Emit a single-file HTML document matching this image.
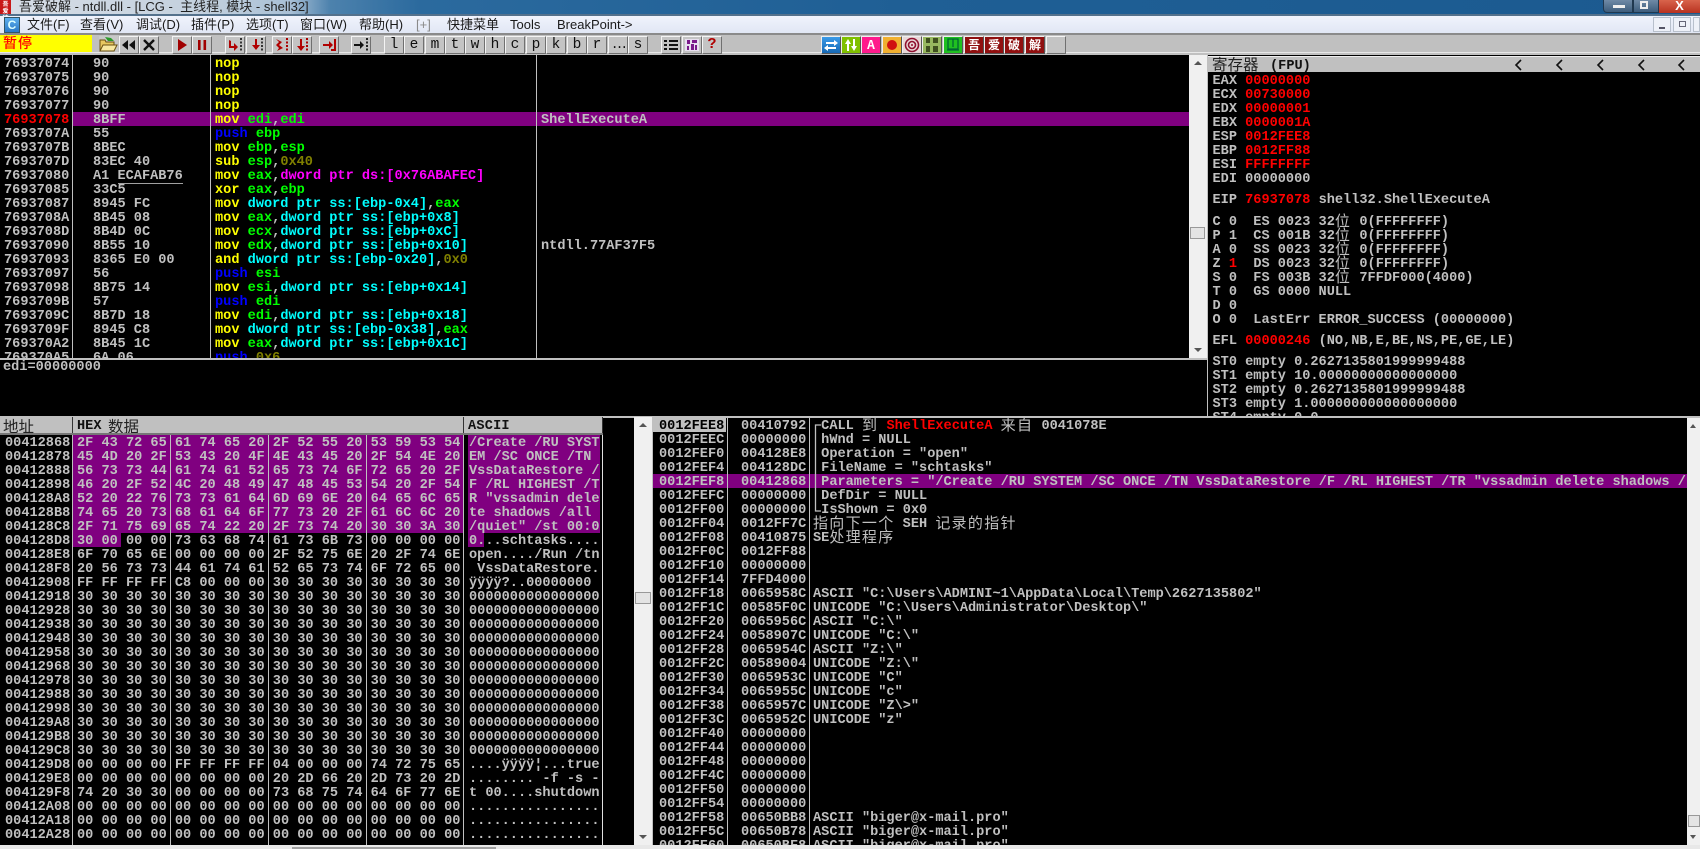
<!DOCTYPE html>
<html><head><meta charset="utf-8"><style>
html,body{margin:0;padding:0;background:#000;width:1700px;height:849px;overflow:hidden}
#p{position:absolute;left:0;top:0;width:1700px;height:849px;overflow:hidden;background:#000;font-family:"Liberation Sans","Noto Sans CJK SC",sans-serif;filter:blur(.35px)}
.a{position:absolute}
.c{position:absolute;white-space:pre;font:bold 13.6px/14px "Liberation Mono","Noto Sans CJK SC",monospace;color:#c0c0c0;transform:translateY(2px)}
.r{position:absolute;left:4.5px;white-space:pre;font:bold 13.6px/14px "Liberation Mono","Noto Sans CJK SC",monospace;color:#c0c0c0;height:14px;transform:translateY(2px)}
.h{position:absolute;background:#800080}
.v{position:absolute;width:1px;background:#c0c0c0}
.y{color:#ff0}.g{color:#0f0}.u{color:#00f}.k{color:#0ff}.m{color:#f0f}.o{color:#808000}.e{color:#f00}
.z{display:inline-block;position:relative;top:-2px;height:14px;line-height:14px;vertical-align:top;font:400 15px/14px "WenQuanYi Zen Hei","Noto Sans CJK SC",sans-serif;letter-spacing:1.3px}
.mn{position:absolute;top:16px;font-size:13px;line-height:17px;color:#1a1a1a;white-space:pre}
.b{position:absolute;top:36px;width:18px;height:16px;background:#c4c4c4;border:1px solid;border-color:#f4f4f4 #707070 #707070 #f4f4f4;box-sizing:content-box;text-align:center;font:14.5px/16px "Liberation Mono",monospace;color:#111;overflow:hidden}
.b svg{position:absolute;left:0;top:0}
.i{position:absolute;top:36px;width:18px;height:16px;border:1px solid #ddd;border-color:#eee #555 #555 #eee;text-align:center;overflow:hidden;color:#fff;font:700 12px/16px "Noto Sans CJK SC",sans-serif}
.i svg{position:absolute;left:0;top:0}
.st div{height:14px;white-space:pre}
</style></head><body><div id="p">

<!-- title bar -->
<div class="a" style="left:0;top:0;width:1700px;height:15px;background:linear-gradient(90deg,#d7dde6 0,#c4d1de 200px,#a9c0d6 290px,#4d82ad 330px,#2b6a9e 420px,#1f5f95 900px,#1b5a90 1700px)"></div>
<div class="a" style="left:0;top:14px;width:1700px;height:2px;background:#54718c"></div>
<div class="a" style="left:0;top:0;width:11px;height:14px;background:#c81818;color:#fff;font:700 6px/7px 'Noto Sans CJK SC',sans-serif;text-align:center">吾爱破解</div>
<div class="a" style="left:19px;top:0;font-size:13px;line-height:14px;color:#222;white-space:pre">吾爱破解 - ntdll.dll - [LCG -  主线程, 模块 - shell32]</div>
<!-- caption buttons -->
<div class="a" style="left:1603px;top:0;width:30px;height:13px;background:linear-gradient(#6f8aa6,#3e5d7c);border:1px solid #20384f;border-top:0;border-radius:0 0 0 4px;box-sizing:border-box"><div class="a" style="left:9px;top:5px;width:12px;height:3px;background:#eee"></div></div>
<div class="a" style="left:1633px;top:0;width:26px;height:13px;background:linear-gradient(#6f8aa6,#3e5d7c);border:1px solid #20384f;border-top:0;box-sizing:border-box"><div class="a" style="left:6px;top:1px;width:8px;height:8px;border:2px solid #eee;box-sizing:border-box"></div></div>
<div class="a" style="left:1659px;top:0;width:41px;height:13px;background:linear-gradient(#d8644c,#b83220);color:#fff;font:700 13px/11px 'Liberation Sans',sans-serif;text-align:center">X</div>

<!-- menu -->
<div class="a" style="left:0;top:16px;width:1700px;height:18px;background:linear-gradient(#f0f3fc,#e0e6f4)"></div>
<div class="a" style="left:0;top:33px;width:1700px;height:2px;background:#8a8a8a"></div>
<div class="a" style="left:4px;top:17px;width:16px;height:16px;background:linear-gradient(#5fb0ee,#2a78c6);border:1px solid #356;box-sizing:border-box;color:#dff;font:700 12px/14px 'Liberation Sans',sans-serif;text-align:center">C</div>
<div class="mn" style="left:27px">文件(F)</div>
<div class="mn" style="left:80px">查看(V)</div>
<div class="mn" style="left:136px">调试(D)</div>
<div class="mn" style="left:191px">插件(P)</div>
<div class="mn" style="left:246px">选项(T)</div>
<div class="mn" style="left:300px">窗口(W)</div>
<div class="mn" style="left:359px">帮助(H)</div>
<div class="mn" style="left:416px;color:#8a8a8a">[+]</div>
<div class="mn" style="left:447px">快捷菜单</div>
<div class="mn" style="left:510px">Tools</div>
<div class="mn" style="left:557px">BreakPoint-&gt;</div>
<div class="a" style="left:1653px;top:17px;width:18px;height:15px;background:#eef1f8;border:1px solid #b8c0cc;box-sizing:border-box"><div class="a" style="left:5px;top:9px;width:6px;height:2px;background:#556"></div></div>
<div class="a" style="left:1673px;top:17px;width:18px;height:15px;background:#eef1f8;border:1px solid #b8c0cc;box-sizing:border-box"><div class="a" style="left:5px;top:3px;width:7px;height:6px;border:1px solid #667;box-sizing:border-box"></div></div>
<div class="a" style="left:1693px;top:17px;width:7px;height:15px;background:#eef1f8;border:1px solid #b8c0cc;box-sizing:border-box"></div>

<!-- toolbar -->
<div class="a" style="left:0;top:35px;width:1700px;height:20px;background:#c0c0c0"></div>
<div class="a" style="left:0;top:52px;width:1700px;height:1px;background:#e8e8e8"></div>
<div class="a" style="left:0;top:35px;width:92px;height:17px;background:#ff0;color:#f00;font:500 14px/17px 'Noto Sans CJK SC',sans-serif;padding-left:3px;box-sizing:border-box;letter-spacing:1px">暂停</div>

<div class="a" style="left:99px;top:36px;width:19px;height:16px;background:#c8c8c8"><svg width="19" height="16"><path d="M6 1l6 1 3 3-6 0z" fill="#2a9a2a"/><path d="M1 4h5l1 2h8v9H1z" fill="#e8c860" stroke="#6a5010"/><path d="M1 15l3-6h14l-3 6z" fill="#f8e8a0" stroke="#6a5010"/></svg></div>
<div class="b" style="left:119px"><svg width="18" height="16"><path d="M8 3v10L2 8zM15 3v10L9 8z" fill="#111"/></svg></div>
<div class="b" style="left:139px"><svg width="18" height="16"><path d="M4 3l10 10M14 3L4 13" stroke="#111" stroke-width="2.4"/></svg></div>
<div class="b" style="left:172px"><svg width="18" height="16"><path d="M5 2v12l9-6z" fill="#a00000"/></svg></div>
<div class="b" style="left:192px"><svg width="18" height="16"><path d="M5 3h2.6v10H5zM10.5 3h2.6v10h-2.6z" fill="#a00000"/></svg></div>
<div class="b" style="left:225px"><svg width="18" height="16"><path d="M3 3l2 1v5h3V6l4 4-4 4v-3H3z" fill="#b00000"/><path d="M15 1v14" stroke="#333" stroke-width="2" stroke-dasharray="2 1.5"/></svg></div>
<div class="b" style="left:246px"><svg width="18" height="16"><path d="M8 2h2v6h3l-4 5-4-5h3z" fill="#b00000"/><path d="M15 1v14" stroke="#333" stroke-width="2" stroke-dasharray="2 1.5"/></svg></div>
<div class="b" style="left:272px"><svg width="18" height="16"><path d="M3 2l6 3-3 3 4 3-6 3 2-3-3-3 3-3z" fill="#b00000"/><path d="M14 1v14" stroke="#a00" stroke-width="2" stroke-dasharray="2 1.5"/></svg></div>
<div class="b" style="left:292px"><svg width="18" height="16"><path d="M7 2h2v7h3l-4 5-4-5h3z" fill="#b00000"/><path d="M14 1v14" stroke="#a00" stroke-width="2" stroke-dasharray="2 1.5"/></svg></div>
<div class="b" style="left:319px"><svg width="18" height="16"><path d="M3 7h6V4l4 4-4 4V9H3z" fill="#b00000"/><path d="M15 2v11h-4" stroke="#b00000" stroke-width="2" fill="none"/></svg></div>
<div class="b" style="left:351px"><svg width="18" height="16"><path d="M2 7h6V4l4 4-4 4V9H2z" fill="#111"/><path d="M15 1v14" stroke="#222" stroke-width="2" stroke-dasharray="2 1.5"/></svg></div>
<div class="b" style="left:384px">l</div>
<div class="b" style="left:404px">e</div>
<div class="b" style="left:425px">m</div>
<div class="b" style="left:445px">t</div>
<div class="b" style="left:465px">w</div>
<div class="b" style="left:485px">h</div>
<div class="b" style="left:505px">c</div>
<div class="b" style="left:526px">p</div>
<div class="b" style="left:546px">k</div>
<div class="b" style="left:567px">b</div>
<div class="b" style="left:587px">r</div>
<div class="b" style="left:608px;letter-spacing:-3px;font-size:13px">...</div>
<div class="b" style="left:628px">s</div>
<div class="b" style="left:661px"><svg width="18" height="16"><path d="M2 3h3v2H2zM7 3h9v2H7zM2 7h3v2H2zM7 7h9v2H7zM2 11h3v2H2zM7 11h9v2H7z" fill="#111"/></svg></div>
<div class="b" style="left:682px"><svg width="18" height="16"><rect x="2" y="2" width="14" height="12" fill="#e8e0f0"/><path d="M4 3h3v4H4zM9 3h5v3H9zM8 7h3v6H8zM12 8h2v5h-2zM4 9h2v4H4z" fill="#7a1a8a"/></svg></div>
<div class="b" style="left:702px;color:#b00000;font-weight:700;font-size:15px">?</div>

<div class="i" style="left:821px;background:linear-gradient(#3a9ae8,#1668b4)"><svg width="18" height="16"><path d="M4 5h8V3l4 3-4 3V7H4zM14 10H6V8L2 11l4 3v-2h8z" fill="#fff"/></svg></div>
<div class="i" style="left:841px;background:#80c000"><svg width="18" height="16"><path d="M6 2l3 5H7v7H5V7H3zM12 14l3-5h-2V2h-2v7H9z" fill="#fff"/></svg></div>
<div class="i" style="left:861px;background:#ff1a8c">A</div>
<div class="i" style="left:882px;background:#f0b030"><svg width="18" height="16"><circle cx="9" cy="8" r="5" fill="#d01010"/></svg></div>
<div class="i" style="left:902px;background:#e8d8d8"><svg width="18" height="16"><circle cx="9" cy="8" r="6.5" fill="none" stroke="#901030" stroke-width="1.6"/><circle cx="9" cy="8" r="3.5" fill="none" stroke="#901030" stroke-width="1.6"/><circle cx="9" cy="8" r="1" fill="#901030"/></svg></div>
<div class="i" style="left:922px;background:#98b860"><svg width="18" height="16"><path d="M3 1h4v5H3zM10 1h5v5h-5zM3 9h4v6H3zM10 9h5v6h-5z" fill="#405020"/></svg></div>
<div class="i" style="left:943px;background:#20c020"><svg width="18" height="16"><path d="M4 2h10v10H4zM9 2v8M3 13h12" fill="none" stroke="#063" stroke-width="1.3"/></svg></div>
<div class="i" style="left:964px;background:#901010">吾</div>
<div class="i" style="left:984px;background:#901010">爱</div>
<div class="i" style="left:1004px;background:#901010">破</div>
<div class="i" style="left:1025px;background:#901010">解</div>
<div class="b" style="left:1046px"></div>

<!-- disassembly -->
<div class="h" style="left:72px;top:112px;width:1117px;height:14px"></div>
<div class="a" style="left:0;top:55px;width:1189px;height:303px;overflow:hidden">
<div class="c" style="left:4px;top:1px">76937074
76937075
76937076
76937077
<span class="e">76937078</span>
7693707A
7693707B
7693707D
76937080
76937085
76937087
7693708A
7693708D
76937090
76937093
76937097
76937098
7693709B
7693709C
7693709F
769370A2
769370A5</div>
<div class="c" style="left:93px;top:1px">90
90
90
90
8BFF
55
8BEC
83EC 40
A1 ECAFAB76
33C5
8945 FC
8B45 08
8B4D 0C
8B55 10
8365 E0 00
56
8B75 14
57
8B7D 18
8945 C8
8B45 1C
6A 06</div>
<div class="c" style="left:215px;top:1px"><span class="y">nop</span>
<span class="y">nop</span>
<span class="y">nop</span>
<span class="y">nop</span>
<span class="y">mov</span> <span class="g">edi</span>,<span class="g">edi</span>
<span class="u">push</span> <span class="g">ebp</span>
<span class="y">mov</span> <span class="g">ebp</span>,<span class="g">esp</span>
<span class="y">sub</span> <span class="g">esp</span>,<span class="o">0x40</span>
<span class="y">mov</span> <span class="g">eax</span>,<span class="m">dword ptr ds:[0x76ABAFEC]</span>
<span class="y">xor</span> <span class="g">eax</span>,<span class="g">ebp</span>
<span class="y">mov</span> <span class="k">dword ptr ss:[ebp-0x4]</span>,<span class="g">eax</span>
<span class="y">mov</span> <span class="g">eax</span>,<span class="k">dword ptr ss:[ebp+0x8]</span>
<span class="y">mov</span> <span class="g">ecx</span>,<span class="k">dword ptr ss:[ebp+0xC]</span>
<span class="y">mov</span> <span class="g">edx</span>,<span class="k">dword ptr ss:[ebp+0x10]</span>
<span class="y">and</span> <span class="k">dword ptr ss:[ebp-0x20]</span>,<span class="o">0x0</span>
<span class="u">push</span> <span class="g">esi</span>
<span class="y">mov</span> <span class="g">esi</span>,<span class="k">dword ptr ss:[ebp+0x14]</span>
<span class="u">push</span> <span class="g">edi</span>
<span class="y">mov</span> <span class="g">edi</span>,<span class="k">dword ptr ss:[ebp+0x18]</span>
<span class="y">mov</span> <span class="k">dword ptr ss:[ebp-0x38]</span>,<span class="g">eax</span>
<span class="y">mov</span> <span class="g">eax</span>,<span class="k">dword ptr ss:[ebp+0x1C]</span>
<span class="u">push</span> <span class="o">0x6</span></div>
<div class="c" style="left:541px;top:57px">ShellExecuteA</div>
<div class="c" style="left:541px;top:183px">ntdll.77AF37F5</div>
</div>
<div class="a" style="left:118px;top:183px;width:65px;height:1px;background:#a0a0a0"></div>
<div class="v" style="left:72px;top:55px;height:303px"></div>
<div class="v" style="left:210px;top:55px;height:303px"></div>
<div class="v" style="left:536px;top:55px;height:303px"></div>
<!-- disasm scrollbar -->
<div class="a" style="left:1189px;top:55px;width:18px;height:303px;background:#f0f0f0"></div>
<div class="a" style="left:1194px;top:61px;border:4px solid transparent;border-bottom:4px solid #555;border-top:0"></div>
<div class="a" style="left:1194px;top:348px;border:4px solid transparent;border-top:4px solid #555;border-bottom:0"></div>
<div class="a" style="left:1190px;top:227px;width:15px;height:12px;background:#e4e4e4;border:1px solid #999;box-sizing:border-box"></div>
<div class="a" style="left:1207px;top:55px;width:1px;height:361px;background:#c0c0c0"></div>
<div class="a" style="left:0;top:358px;width:1207px;height:2px;background:#c0c0c0"></div>
<div class="c" style="left:3px;top:359px">edi=00000000</div>

<!-- registers -->
<div class="a" style="left:1208px;top:56px;width:492px;height:16px;background:#c0c0c0;border-top:1px solid #eee;box-sizing:border-box"></div>
<div class="a" style="left:1212px;top:56px;font:400 15.5px/16px 'WenQuanYi Zen Hei','Noto Sans CJK SC',sans-serif;color:#222;white-space:pre">寄存器</div>
<div class="a" style="left:1270px;top:60px;font:700 13.6px/14px 'Liberation Mono',monospace;color:#111">(FPU)</div>
<svg class="a" style="left:1510px;top:59px" width="190" height="13"><g fill="none" stroke="#111" stroke-width="1.6"><path d="M11 1L6 6l5 5M52 1l-5 5 5 5M93 1l-5 5 5 5M134 1l-5 5 5 5M174 1l-5 5 5 5"/></g></svg>
<div class="a" style="left:1208px;top:72px;width:492px;height:344px;overflow:hidden">
<div class="r" style="top:1px">EAX <span class="e">00000000</span></div>
<div class="r" style="top:15px">ECX <span class="e">00730000</span></div>
<div class="r" style="top:29px">EDX <span class="e">00000001</span></div>
<div class="r" style="top:43px">EBX <span class="e">0000001A</span></div>
<div class="r" style="top:57px">ESP <span class="e">0012FEE8</span></div>
<div class="r" style="top:71px">EBP <span class="e">0012FF88</span></div>
<div class="r" style="top:85px">ESI <span class="e">FFFFFFFF</span></div>
<div class="r" style="top:99px">EDI 00000000</div>
<div class="r" style="top:120px">EIP <span class="e">76937078</span> shell32.ShellExecuteA</div>
<div class="r" style="top:142px">C 0  ES 0023 32<span class="z">位</span> 0(FFFFFFFF)</div>
<div class="r" style="top:156px">P 1  CS 001B 32<span class="z">位</span> 0(FFFFFFFF)</div>
<div class="r" style="top:170px">A 0  SS 0023 32<span class="z">位</span> 0(FFFFFFFF)</div>
<div class="r" style="top:184px">Z <span class="e">1</span>  DS 0023 32<span class="z">位</span> 0(FFFFFFFF)</div>
<div class="r" style="top:198px">S 0  FS 003B 32<span class="z">位</span> 7FFDF000(4000)</div>
<div class="r" style="top:212px">T 0  GS 0000 NULL</div>
<div class="r" style="top:226px">D 0</div>
<div class="r" style="top:240px">O 0  LastErr ERROR_SUCCESS (00000000)</div>
<div class="r" style="top:261px">EFL <span class="e">00000246</span> (NO,NB,E,BE,NS,PE,GE,LE)</div>
<div class="r" style="top:282px">ST0 empty 0.2627135801999999488</div>
<div class="r" style="top:296px">ST1 empty 10.00000000000000000</div>
<div class="r" style="top:310px">ST2 empty 0.2627135801999999488</div>
<div class="r" style="top:324px">ST3 empty 1.000000000000000000</div>
<div class="r" style="top:338px">ST4 empty 0.0</div>
</div>
<div class="a" style="left:0;top:416px;width:1700px;height:2px;background:#c0c0c0"></div>

<!-- hex header -->
<div class="a" style="left:0;top:417px;width:603px;height:18px;background:#c0c0c0"></div>
<div class="a" style="left:3px;top:418px;font:400 15.5px/16px 'WenQuanYi Zen Hei','Noto Sans CJK SC',sans-serif;color:#222">地址</div>
<div class="a" style="left:77px;top:420px;font:700 13.6px/14px 'Liberation Mono',monospace;color:#111;white-space:pre">HEX</div>
<div class="a" style="left:108px;top:418px;font:400 15.5px/16px 'WenQuanYi Zen Hei','Noto Sans CJK SC',sans-serif;color:#222">数据</div>
<div class="a" style="left:468px;top:420px;font:700 13.6px/14px 'Liberation Mono',monospace;color:#111;letter-spacing:.2px">ASCII</div>
<div class="a" style="left:72px;top:417px;width:1px;height:18px;background:#333"></div>
<div class="a" style="left:463px;top:417px;width:1px;height:18px;background:#333"></div>
<div class="a" style="left:602px;top:417px;width:1px;height:18px;background:#333"></div>
<div class="a" style="left:0;top:433px;width:603px;height:2px;background:#777"></div>

<!-- hex highlight -->
<div class="h" style="left:73px;top:435px;width:390px;height:98px"></div>
<div class="h" style="left:73px;top:533px;width:48px;height:14px"></div>
<div class="h" style="left:468px;top:435px;width:132px;height:98px"></div>
<div class="h" style="left:468px;top:533px;width:16px;height:14px"></div>
<div class="c" style="left:5px;top:435px">00412868
00412878
00412888
00412898
004128A8
004128B8
004128C8
004128D8
004128E8
004128F8
00412908
00412918
00412928
00412938
00412948
00412958
00412968
00412978
00412988
00412998
004129A8
004129B8
004129C8
004129D8
004129E8
004129F8
00412A08
00412A18
00412A28</div>
<div class="c" style="left:77px;top:435px">2F 43 72 65 61 74 65 20 2F 52 55 20 53 59 53 54
45 4D 20 2F 53 43 20 4F 4E 43 45 20 2F 54 4E 20
56 73 73 44 61 74 61 52 65 73 74 6F 72 65 20 2F
46 20 2F 52 4C 20 48 49 47 48 45 53 54 20 2F 54
52 20 22 76 73 73 61 64 6D 69 6E 20 64 65 6C 65
74 65 20 73 68 61 64 6F 77 73 20 2F 61 6C 6C 20
2F 71 75 69 65 74 22 20 2F 73 74 20 30 30 3A 30
30 00 00 00 73 63 68 74 61 73 6B 73 00 00 00 00
6F 70 65 6E 00 00 00 00 2F 52 75 6E 20 2F 74 6E
20 56 73 73 44 61 74 61 52 65 73 74 6F 72 65 00
FF FF FF FF C8 00 00 00 30 30 30 30 30 30 30 30
30 30 30 30 30 30 30 30 30 30 30 30 30 30 30 30
30 30 30 30 30 30 30 30 30 30 30 30 30 30 30 30
30 30 30 30 30 30 30 30 30 30 30 30 30 30 30 30
30 30 30 30 30 30 30 30 30 30 30 30 30 30 30 30
30 30 30 30 30 30 30 30 30 30 30 30 30 30 30 30
30 30 30 30 30 30 30 30 30 30 30 30 30 30 30 30
30 30 30 30 30 30 30 30 30 30 30 30 30 30 30 30
30 30 30 30 30 30 30 30 30 30 30 30 30 30 30 30
30 30 30 30 30 30 30 30 30 30 30 30 30 30 30 30
30 30 30 30 30 30 30 30 30 30 30 30 30 30 30 30
30 30 30 30 30 30 30 30 30 30 30 30 30 30 30 30
30 30 30 30 30 30 30 30 30 30 30 30 30 30 30 30
00 00 00 00 FF FF FF FF 04 00 00 00 74 72 75 65
00 00 00 00 00 00 00 00 20 2D 66 20 2D 73 20 2D
74 20 30 30 00 00 00 00 73 68 75 74 64 6F 77 6E
00 00 00 00 00 00 00 00 00 00 00 00 00 00 00 00
00 00 00 00 00 00 00 00 00 00 00 00 00 00 00 00
00 00 00 00 00 00 00 00 00 00 00 00 00 00 00 00</div>
<div class="c" style="left:469px;top:435px">/Create /RU SYST
EM /SC ONCE /TN 
VssDataRestore /
F /RL HIGHEST /T
R "vssadmin dele
te shadows /all 
/quiet" /st 00:0
0...schtasks....
open..../Run /tn
 VssDataRestore.
ÿÿÿÿ?..00000000
0000000000000000
0000000000000000
0000000000000000
0000000000000000
0000000000000000
0000000000000000
0000000000000000
0000000000000000
0000000000000000
0000000000000000
0000000000000000
0000000000000000
....ÿÿÿÿ¦...true
........ -f -s -
t 00....shutdown
................
................
................</div>
<div class="v" style="left:72px;top:435px;height:410px"></div>
<div class="v" style="left:170px;top:435px;height:410px"></div>
<div class="v" style="left:268px;top:435px;height:410px"></div>
<div class="v" style="left:366px;top:435px;height:410px"></div>
<div class="v" style="left:463px;top:435px;height:410px"></div>
<div class="a" style="left:602px;top:435px;width:1px;height:410px;background:#e0e0e0"></div>
<!-- hex scrollbar -->
<div class="a" style="left:634px;top:417px;width:18px;height:428px;background:#f0f0f0"></div>
<div class="a" style="left:639px;top:423px;border:4px solid transparent;border-bottom:4px solid #555;border-top:0"></div>
<div class="a" style="left:639px;top:835px;border:4px solid transparent;border-top:4px solid #555;border-bottom:0"></div>
<div class="a" style="left:635px;top:592px;width:16px;height:12px;background:#e4e4e4;border:1px solid #999;box-sizing:border-box"></div>
<div class="a" style="left:652px;top:417px;width:1px;height:428px;background:#c0c0c0"></div>

<!-- stack -->
<div class="a" style="left:653px;top:418px;width:73px;height:14px;background:#c0c0c0"></div>
<div class="h" style="left:653px;top:474px;width:1034px;height:14px"></div>
<div class="a" style="left:653px;top:418px;width:1034px;height:427px;overflow:hidden">
<div class="c" style="left:6px;top:0"><span style="color:#000">0012FEE8</span>
0012FEEC
0012FEF0
0012FEF4
0012FEF8
0012FEFC
0012FF00
0012FF04
0012FF08
0012FF0C
0012FF10
0012FF14
0012FF18
0012FF1C
0012FF20
0012FF24
0012FF28
0012FF2C
0012FF30
0012FF34
0012FF38
0012FF3C
0012FF40
0012FF44
0012FF48
0012FF4C
0012FF50
0012FF54
0012FF58
0012FF5C
0012FF60</div>
<div class="c" style="left:88px;top:0">00410792
00000000
004128E8
004128DC
00412868
00000000
00000000
0012FF7C
00410875
0012FF88
00000000
7FFD4000
0065958C
00585F0C
0065956C
0058907C
0065954C
00589004
0065953C
0065955C
0065957C
0065952C
00000000
00000000
00000000
00000000
00000000
00000000
00650BB8
00650B78
00650BF8</div>
<div class="c st" style="left:160px;top:0"><div> CALL <span class="z">到</span> <span class="e">ShellExecuteA</span> <span class="z">来自</span> 0041078E</div><div> hWnd = NULL</div><div> Operation = "open"</div><div> FileName = "schtasks"</div><div> Parameters = "/Create /RU SYSTEM /SC ONCE /TN VssDataRestore /F /RL HIGHEST /TR "vssadmin delete shadows /</div><div> DefDir = NULL</div><div> IsShown = 0x0</div><div><span class="z">指向下一个</span> SEH <span class="z">记录的指针</span></div><div>SE<span class="z">处理程序</span></div><div> </div><div> </div><div> </div><div>ASCII "C:\Users\ADMINI~1\AppData\Local\Temp\2627135802"</div><div>UNICODE "C:\Users\Administrator\Desktop\"</div><div>ASCII "C:\"</div><div>UNICODE "C:\"</div><div>ASCII "Z:\"</div><div>UNICODE "Z:\"</div><div>UNICODE "C"</div><div>UNICODE "c"</div><div>UNICODE "Z\&gt;"</div><div>UNICODE "z"</div><div> </div><div> </div><div> </div><div> </div><div> </div><div> </div><div>ASCII "biger@x-mail.pro"</div><div>ASCII "biger@x-mail.pro"</div><div>ASCII "biger@x-mail.pro"</div></div>
</div>
<div class="v" style="left:727px;top:418px;height:427px"></div>
<div class="v" style="left:809px;top:418px;height:427px"></div>
<svg class="a" style="left:812px;top:420px" width="12" height="96"><path d="M9 5H3.5v86H9" fill="none" stroke="#c0c0c0" stroke-width="1.3"/></svg>
<!-- stack scrollbar -->
<div class="a" style="left:1687px;top:418px;width:13px;height:427px;background:#f0f0f0"></div>
<div class="a" style="left:1690px;top:424px;border:3.5px solid transparent;border-bottom:4px solid #555;border-top:0"></div>
<div class="a" style="left:1690px;top:835px;border:3.5px solid transparent;border-top:4px solid #555;border-bottom:0"></div>
<div class="a" style="left:1688px;top:815px;width:12px;height:12px;background:#e4e4e4;border:1px solid #999;box-sizing:border-box"></div>

<!-- bottom strip -->
<div class="a" style="left:0;top:845px;width:1700px;height:4px;background:#e8e8e8"></div>
<div class="a" style="left:292px;top:847px;width:204px;height:2px;background:#a0a0a0"></div>
</div></body></html>
